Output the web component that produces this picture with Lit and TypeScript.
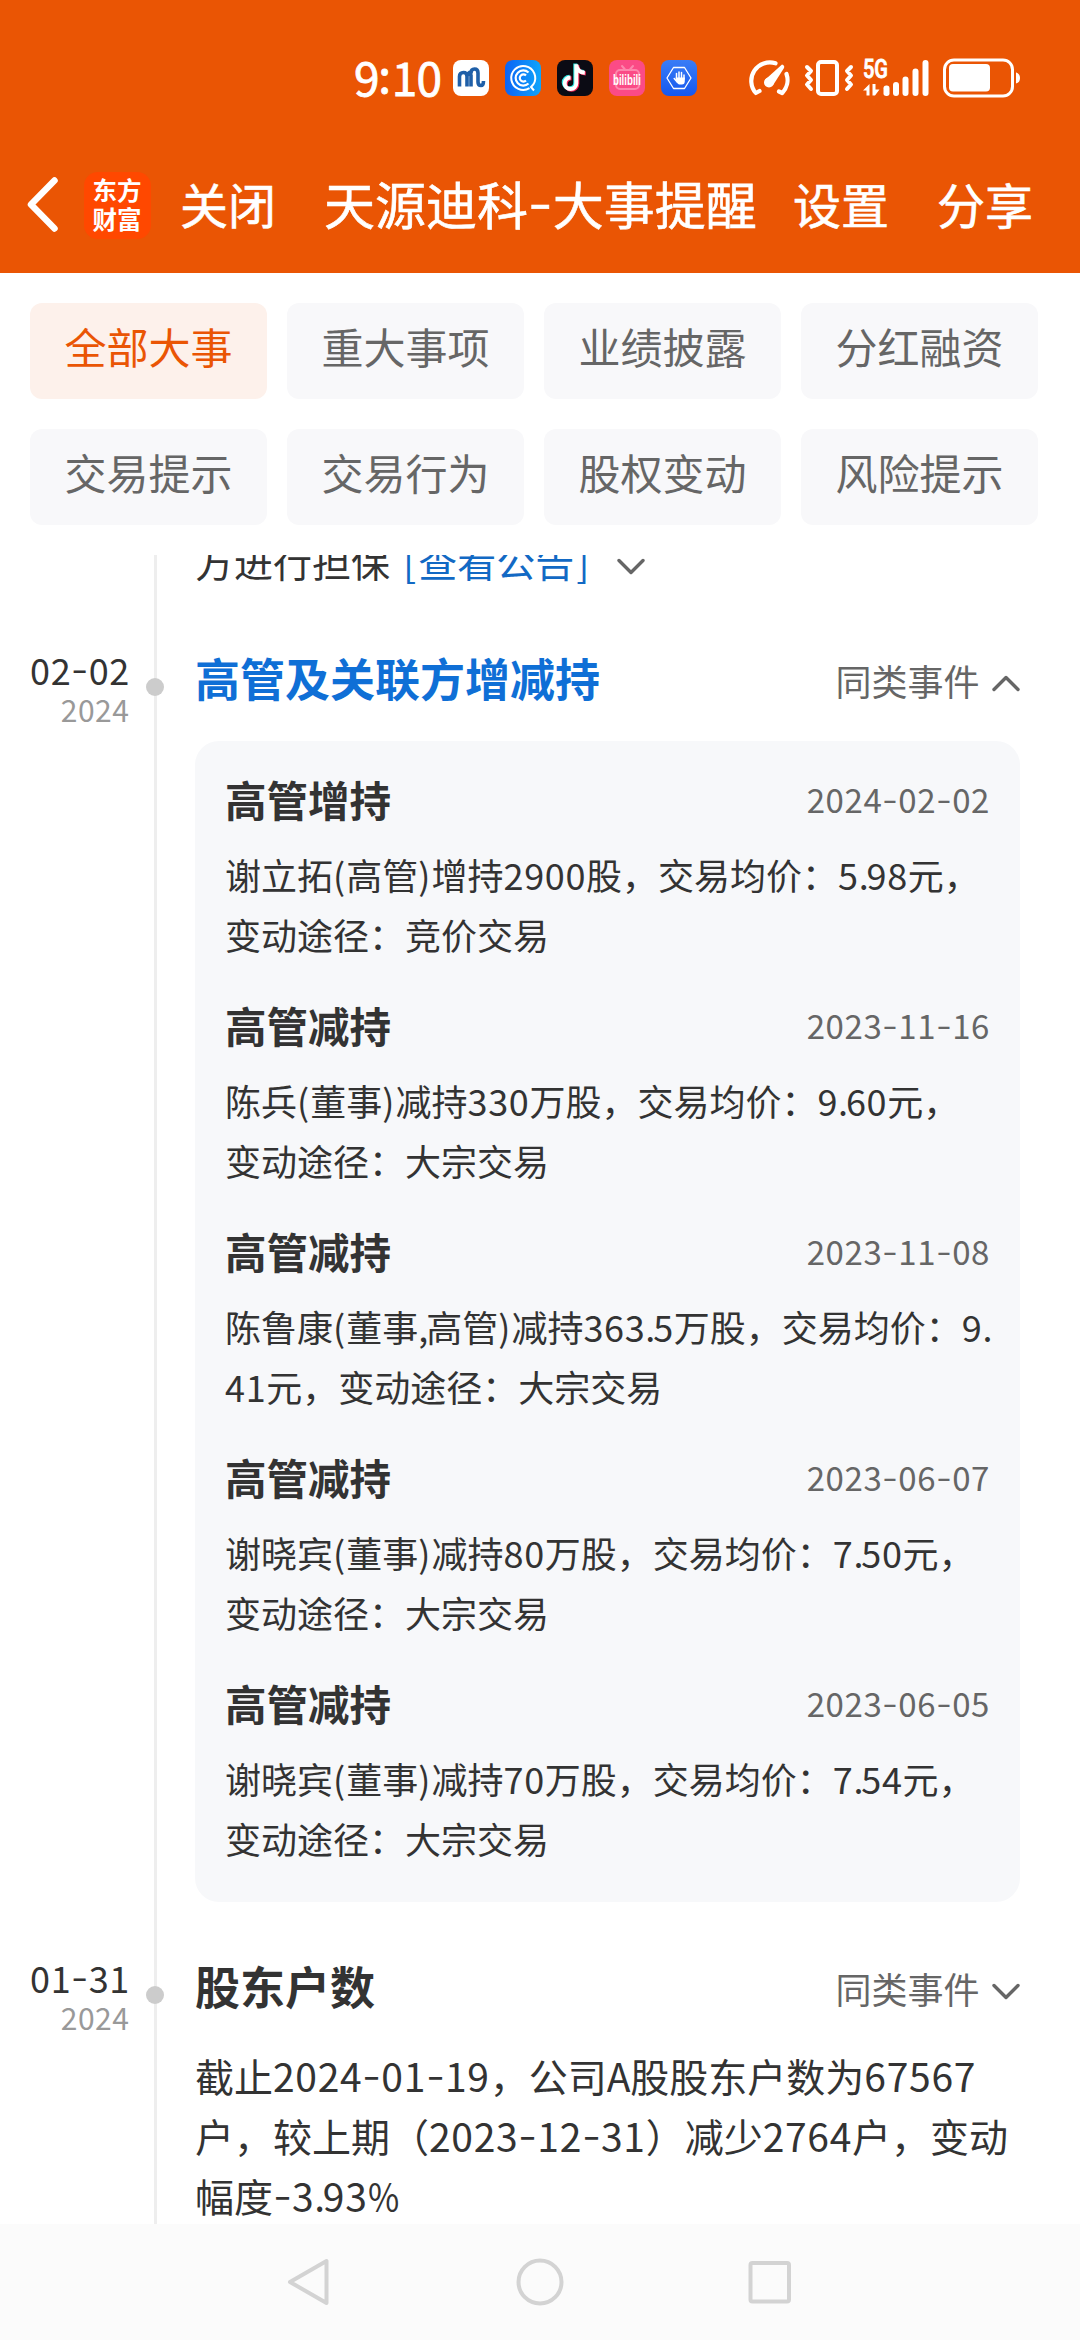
import { LitElement, html, svg, css } from "lit";
import { customElement, property } from "lit/decorators.js";
import { classMap } from "lit/directives/class-map.js";

/** Splits text so that digits, hyphens and half-width marks get their own spacing. */
const runs = (text: string) =>
  text
    .split(/(\d+|-|[()]|[.,]|%)/)
    .filter((part) => part !== "")
    .map((part) => {
      if (part === "-") return html`<span class="hy">-</span>`;
      if (part === "%") return html`<span class="pct">%</span>`;
      if (/^\d/.test(part)) return html`<span class="num">${part}</span>`;
      if (/^[()]/.test(part)) return html`<span class="par">${part}</span>`;
      if (/^[.,]/.test(part)) return html`<span class="dot">${part}</span>`;
      return html`${part}`;
    });

const textStyles = css`
  * { box-sizing: border-box; }
  .num { letter-spacing: 0.018em; }
  .par { letter-spacing: 0.03em; }
  .dot { letter-spacing: -0.06em; }
  .pct { display: inline-block; transform: scaleX(0.87); transform-origin: 0 50%; }
  .hy {
    display: inline-block;
    width: 0.485em;
    text-align: center;
    transform: translateY(-0.07em) scaleX(1.3);
  }
`;

const tabs = ["全部大事", "重大事项", "业绩披露", "分红融资", "交易提示", "交易行为", "股权变动", "风险提示"];

interface Trade { title: string; date: string; lines: string[]; }

const trades: Trade[] = [
  { title: "高管增持", date: "2024-02-02", lines: ["谢立拓(高管)增持2900股，交易均价：5.98元，", "变动途径：竞价交易"] },
  { title: "高管减持", date: "2023-11-16", lines: ["陈兵(董事)减持330万股，交易均价：9.60元，", "变动途径：大宗交易"] },
  { title: "高管减持", date: "2023-11-08", lines: ["陈鲁康(董事,高管)减持363.5万股，交易均价：9.", "41元，变动途径：大宗交易"] },
  { title: "高管减持", date: "2023-06-07", lines: ["谢晓宾(董事)减持80万股，交易均价：7.50元，", "变动途径：大宗交易"] },
  { title: "高管减持", date: "2023-06-05", lines: ["谢晓宾(董事)减持70万股，交易均价：7.54元，", "变动途径：大宗交易"] },
];

@customElement("status-bar")
class StatusBar extends LitElement {
  static styles = css`
    :host { display: flex; height: 154px; padding: 60px 59px 0 354px; align-items: flex-start; }
    .time { width: 99px; font-size: 46px; line-height: 33px; letter-spacing: -0.8px; white-space: nowrap; -webkit-text-stroke: 0.8px #fff; }
    .time .colon { display: inline-block; width: 13px; text-align: center; transform: translate(-1px, -3px); }
    .apps { display: flex; gap: 16px; }
    svg { display: block; flex: none; }
    .system { display: flex; margin-left: auto; margin-top: -4px; }
  `;

  render() {
    return html`
      <div class="time">9<span class="colon">:</span>10</div>
      <div class="apps">
        <svg width="36" height="36" viewBox="0 0 36 36">
          <rect width="36" height="36" rx="8" fill="#fff" />
          <path d="M6.500 26.500V16.500q0-4 4-4 3.500 0 3.500 4V26.500M14 16.500q0-3 3-4.500M18 26.500V13q0-4 3.500-4 3.500 0 3.500 4v9q0 3.500 3 3.500 2.500 0 2.500-4.500" fill="none" stroke="#1f5fa8" stroke-width="3.600" />
          <circle cx="20.500" cy="14" r="1" fill="#fff" />
        </svg>
        <svg width="36" height="36" viewBox="0 0 36 36">
          <defs><linearGradient id="q" x1="0" x2="1"><stop offset="0" stop-color="#0c63f5" /><stop offset="1" stop-color="#0fa5fb" /></linearGradient></defs>
          <rect width="36" height="36" rx="8" fill="url(#q)" />
          <g fill="none" stroke="#fff">
            <path d="M24.500 28.200A12 12 0 1 1 28.300 24.500L26 27l3 3.500" stroke-width="2" />
            <path d="M23.500 12.500A7.600 7.600 0 1 0 23.500 23.500" stroke-width="2.200" />
            <path d="M21 15.500A3.600 3.600 0 1 0 21 20.500" stroke-width="2.200" />
          </g>
        </svg>
        <svg width="36" height="36" viewBox="0 0 36 36">
          <rect width="36" height="36" rx="8" fill="#0b0b14" />
          <g fill="none" stroke-width="4">
            <path d="M19 4v19a5.800 5.800 0 1 1-5.800-5.800M19 5q1 7 8.500 7.500" stroke="#2ee6e2" transform="translate(-.7 -.5)" />
            <path d="M19 4v19a5.800 5.800 0 1 1-5.800-5.800M19 5q1 7 8.500 7.500" stroke="#f5295b" transform="translate(1.300 1)" />
            <path d="M19 4v19a5.800 5.800 0 1 1-5.800-5.800M19 5q1 7 8.500 7.500" stroke="#fff" transform="translate(.3 .3)" />
          </g>
        </svg>
        <svg width="36" height="36" viewBox="0 0 36 36">
          <rect width="36" height="36" rx="8" fill="#fb4b86" />
          <g fill="none" stroke="#fd86ad" stroke-width="2" stroke-linecap="round">
            <rect x="7" y="10" width="23" height="19" rx="4" />
            <path d="M13 6l3 3.500M24 6l-3 3.500" />
          </g>
          <text x="18" y="24.500" text-anchor="middle" textLength="28" lengthAdjust="spacingAndGlyphs" font-family="Liberation Sans" font-weight="700" font-size="15" fill="#fff">bilibili</text>
        </svg>
        <svg width="36" height="36" viewBox="0 0 36 36">
          <defs><linearGradient id="h" x1="0" x2="0" y1="0" y2="1"><stop offset="0" stop-color="#3a7df6" /><stop offset="1" stop-color="#1557ee" /></linearGradient></defs>
          <rect width="36" height="36" rx="8" fill="url(#h)" />
          <path d="M12.500 7.500h11L30 18l-6.500 10.500h-11L6 18z" fill="none" stroke="#fff" stroke-width="1.300" stroke-linejoin="round" />
          <path d="M15.500 18v-4.500M18 18v-6M20.500 18v-5.500M23 19v-4M13.200 18.500l3 3.500" stroke="#fff" stroke-width="1.500" stroke-linecap="round" fill="none" />
          <path d="M14.700 17.500h9.100V21q0 3.500-3 3.500h-2.300q-1.800 0-3.800-4z" fill="#fff" />
        </svg>
      </div>
      <svg class="system" width="276" height="44" viewBox="0 0 276 44">
        <g fill="none" stroke="#fff" stroke-linecap="round" stroke-linejoin="round">
          <path d="M14.500 35L10.800 37A18.500 18.500 0 0 1 30.500 7.300M41.500 18A18.500 18.500 0 0 1 37.200 37L34 35.500" stroke-width="4.200" />
          <rect x="73" y="6" width="19" height="32" rx="3" stroke-width="4" />
          <path d="M61 11l4 4-4 4.500 4 4.500-4 4.500 4 4.500M105 11l-4 4 4 4.500-4 4.500 4 4.500-4 4.500" transform="translate(1 0)" stroke-width="4" />
        </g>
        <circle cx="24" cy="26.500" r="5" fill="#fff" />
        <path d="M19.800 24L37 8.500q3 1 2 3.500L28.500 28.500z" fill="#fff" />
        <text x="118" y="22" textLength="25" lengthAdjust="spacingAndGlyphs" font-family="Roboto" font-weight="500" font-size="25" fill="#fff" stroke="#fff" stroke-width=".8">5G</text>
        <path d="M124.500 28v11.500h-3V34.500H118zM127.500 28h3v5.500h4l-4.500 6h-2.500z" fill="#fff" />
        <g fill="#fff">
          <rect x="138.500" y="29.500" width="6" height="10.500" rx="2.700" />
          <rect x="148" y="26" width="6" height="14" rx="3" />
          <rect x="157.500" y="20.500" width="6" height="19.500" rx="3" />
          <rect x="167.500" y="12.500" width="6" height="27.500" rx="3" />
          <rect x="177.500" y="4" width="6" height="36" rx="3" />
          <rect x="204" y="8" width="41" height="27.500" rx="4" />
          <path d="M271 16.500q4 1 4 5.500t-4 5.500z" />
        </g>
        <rect x="199.500" y="4" width="68" height="36" rx="9.500" fill="none" stroke="#fff" stroke-width="3" />
      </svg>
    `;
  }
}

@customElement("title-bar")
class TitleBar extends LitElement {
  static styles = [
    textStyles,
    css`
      :host { display: flex; align-items: center; height: 98px; padding-left: 23px; font-size: 48px; line-height: 60px; white-space: nowrap; -webkit-text-stroke: 0.6px #fff; }
      .back { display: block; flex: none; margin-top: 2px; }
      .logo { flex: none; margin: 4px 0 0 23px; width: 67px; height: 67px; border-radius: 14px; background: #ff4800; display: grid; align-content: center; justify-content: center; font: 700 24.5px/29px "Noto Sans CJK SC", sans-serif; padding: 0 1px 2px 0; -webkit-text-stroke: 0; }
      .close { width: 96px; margin-left: 29px; }
      .title { margin-left: 48px; width: 433px; font-size: 51px; }
      .set { margin-left: 36px; }
      .share { margin-left: 48px; }
    `,
  ];

  render() {
    return html`
      <svg class="back" width="38" height="60" viewBox="0 0 38 60">
        <path d="M31.500 6.500L8 30.500 31.500 54.500" fill="none" stroke="#fff" stroke-width="6.500" stroke-linecap="round" stroke-linejoin="round" />
      </svg>
      <div class="logo"><span>东方</span><span>财富</span></div>
      <span class="close">关闭</span>
      <span class="title">${runs("天源迪科-大事提醒")}</span>
      <span class="set">设置</span>
      <span class="share">分享</span>
    `;
  }
}

@customElement("chevron-icon")
class ChevronIcon extends LitElement {
  @property({ type: Boolean }) up = false;
  static styles = css`:host { display: block; flex: none; } svg { display: block; }`;
  render() {
    const d = this.up ? "M2 14.500L14 2.500 26 14.500" : "M2 2.500L14 14.500 26 2.500";
    return html`<svg width="28" height="17" viewBox="0 0 28 17">${svg`<path d=${d} fill="none" stroke="#666" stroke-width="3.4" stroke-linecap="round" stroke-linejoin="round" />`}</svg>`;
  }
}

@customElement("timeline-entry")
class TimelineEntry extends LitElement {
  @property() day = "";
  @property() year = "";
  @property() heading = "";
  @property({ type: Boolean }) open = false;
  static styles = [
    textStyles,
    css`
      :host { display: grid; grid-template-columns: 129.5px 50.5px 840px; }
      .when { display: flex; flex-direction: column; align-items: flex-end; white-space: nowrap; }
      .day { font-size: 36px; line-height: 43px; color: #333; width: 99.5px; }
      .year { font-size: 30px; line-height: 36px; color: #999; }
      .marker { display: flex; justify-content: flex-start; padding: 30px 0 0 16.5px; }
      .marker i { width: 18px; height: 18px; border-radius: 50%; background: #ccc; }
      .main { padding-left: 15px; }
      .head { display: flex; align-items: center; height: 60px; }
      .heading { font-size: 45px; line-height: 60px; font-weight: 700; color: #333; }
      .open { color: #0f6fd6; }
      .same { margin: 3px 12px 0 auto; font-size: 36px; color: #666; }
      chevron-icon { margin: 11px 0.5px 0 0; }
    `,
  ];

  render() {
    return html`
      <div class="when"><span class="day">${runs(this.day)}</span><span class="year">${runs(this.year)}</span></div>
      <div class="marker"><i></i></div>
      <div class="main">
        <div class="head">
          <span class=${classMap({ heading: true, open: this.open })}>${this.heading}</span>
          <span class="same">同类事件</span>
          <chevron-icon ?up=${this.open}></chevron-icon>
        </div>
        <slot></slot>
      </div>
    `;
  }
}

@customElement("app-root")
class AppRoot extends LitElement {
  static styles = [
    textStyles,
    css`
      :host { display: flex; flex-direction: column; height: 2340px; width: 1080px; overflow: hidden; background: #fff; color: #333; font-family: "Noto Sans CJK SC", sans-serif; text-spacing-trim: space-all; }
      .top { height: 273px; flex: none; background: #ea5504; color: #fff; }
      .tabs { flex: none; display: grid; grid-template-columns: repeat(4, 237px); grid-auto-rows: 96px; gap: 30px 20px; padding: 30px; height: 282px; }
      .tab { border-radius: 12px; background: #f8f8fa; color: #666; font-size: 42px; line-height: 86px; text-align: center; }
      .active { background: #fdf1eb; color: #ea5504; }
      .feed { flex: 1; min-height: 0; overflow: hidden; display: flex; flex-direction: column; background: linear-gradient(#eee, #eee) 154px 0 / 3px 100% no-repeat; }
      .tail { flex: none; display: flex; align-items: center; height: 60px; margin-top: -25px; padding-left: 195px; font-size: 39px; line-height: 60px; white-space: pre; }
      .link { color: #1269c4; margin-left: 13px; }
      .bracket { letter-spacing: 2px; }
      .tail chevron-icon { margin: 13px 0 0 28px; }
      timeline-entry { flex: none; }
      .first { margin-top: 58px; }
      .second { margin-top: 54px; }
      .card { margin-top: 33px; width: 825px; height: 1161px; padding: 28px 30px; border-radius: 24px; background: #f7f8fa; white-space: nowrap; }
      .trade { height: 226px; }
      .row { display: flex; justify-content: space-between; align-items: center; height: 60px; margin-bottom: 15px; }
      .name { font-size: 41.5px; line-height: 60px; font-weight: 700; }
      .date { font-size: 33px; color: #666; line-height: 60px; }
      .line { font-size: 36px; line-height: 60px; }
      .body { margin-top: 29px; font-size: 39px; line-height: 60px; white-space: nowrap; }
      .nav { flex: none; height: 116px; background: #fbfbfb; display: flex; align-items: center; justify-content: center; gap: 182px; }
      .nav svg { display: block; }
    `,
  ];

  render() {
    return html`
      <header class="top"><status-bar></status-bar><title-bar></title-bar></header>
      <nav class="tabs">
        ${tabs.map((label, i) => html`<div class=${classMap({ tab: true, active: i === 0 })}>${label}</div>`)}
      </nav>
      <main class="feed">
        <div class="tail"><span>方进行担保</span><span class="link"><span class="bracket">[</span>查看公<span class="bracket">告</span>]</span><chevron-icon></chevron-icon></div>
        <timeline-entry class="first" day="02-02" year="2024" heading="高管及关联方增减持" open>
          <div class="card">
            ${trades.map(
              (t) => html`<section class="trade">
                <div class="row"><span class="name">${t.title}</span><span class="date">${runs(t.date)}</span></div>
                ${t.lines.map((l) => html`<div class="line">${runs(l)}</div>`)}
              </section>`,
            )}
          </div>
        </timeline-entry>
        <timeline-entry class="second" day="01-31" year="2024" heading="股东户数">
          <div class="body">
            <div>${runs("截止2024-01-19，公司A股股东户数为67567")}</div>
            <div>${runs("户，较上期（2023-12-31）减少2764户，变动")}</div>
            <div>${runs("幅度-3.93%")}</div>
          </div>
        </timeline-entry>
      </main>
      <footer class="nav">
        <svg width="48" height="48" viewBox="0 0 48 48"><path d="M40.500 3v42L4 24z" fill="none" stroke="#d3d3d3" stroke-width="4" stroke-linejoin="round" /></svg>
        <svg width="48" height="48" viewBox="0 0 48 48"><circle cx="24" cy="24" r="21.500" fill="none" stroke="#d3d3d3" stroke-width="4" /></svg>
        <svg width="48" height="48" viewBox="0 0 48 48"><rect x="4.500" y="5" width="38.500" height="38.500" rx="2" fill="none" stroke="#d3d3d3" stroke-width="4" /></svg>
      </footer>
    `;
  }
}
